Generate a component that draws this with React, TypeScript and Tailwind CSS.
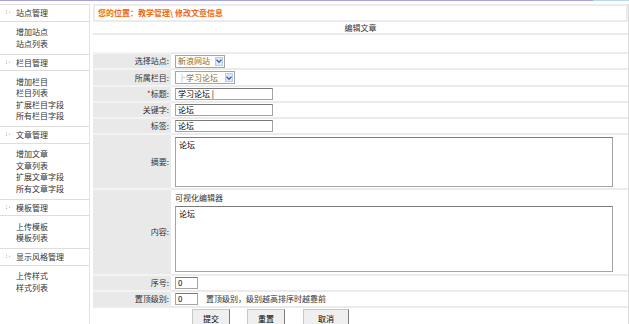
import React from 'react';

const menu = [
  { title: '站点管理', items: ['增加站点', '站点列表'] },
  { title: '栏目管理', items: ['增加栏目', '栏目列表', '扩展栏目字段', '所有栏目字段'] },
  { title: '文章管理', items: ['增加文章', '文章列表', '扩展文章字段', '所有文章字段'] },
  { title: '模板管理', items: ['上传模板', '模板列表'] },
  { title: '显示风格管理', items: ['上传样式', '样式列表'] },
];

function Bullet() {
  return (
    <svg width="5" height="5" viewBox="0 0 5 5" className="mr-[5px]">
      <rect x="0" y="0.5" width="1" height="1" fill="#b0b0b0" />
      <rect x="0" y="3" width="1" height="1" fill="#b0b0b0" />
      <rect x="3" y="1.8" width="1" height="1" fill="#b0b0b0" />
    </svg>
  );
}

function SelectArrow() {
  return (
    <span className="ml-auto mr-[1px] flex h-[9px] w-[8px] shrink-0 items-center justify-center border border-[#b8cde8] bg-[#dce8f8]">
      <svg width="6" height="4" viewBox="0 0 6 4">
        <path d="M0.5 0.8 L3 3.2 L5.5 0.8" stroke="#3a5fa8" strokeWidth="1.3" fill="none" />
      </svg>
    </span>
  );
}

function Row({ label, h, children, star }: { label: string; h: string; children?: React.ReactNode; star?: boolean }) {
  return (
    <div className={`flex ${h}`}>
      <div className="flex w-[78px] shrink-0 items-center justify-end border-t-2 border-[#f3f3f3] bg-[#e9e9e9] pr-[2px] text-[#333]">
        {star && <span className="text-[#e00]">*</span>}
        {label}:
      </div>
      <div className="flex flex-1 items-center border-t-2 border-[#ebebeb] bg-white pl-[4px]">{children}</div>
    </div>
  );
}

function TextBox({ w, value }: { w: string; value: string }) {
  return (
    <div className={`${w} flex h-[12px] items-center border border-[#a5a5a5] border-t-[#7a7a7a] bg-white pl-[2px] text-black`}>
      {value}
    </div>
  );
}

export default function App() {
  return (
    <div className="h-[324px] w-[629px] overflow-hidden bg-white text-[8px] leading-[11.5px] text-[#333] [font-family:'Noto_Sans_CJK_SC','Liberation_Sans',sans-serif]">
      <div className="flex h-px">
        <div className="w-[593px] bg-[#a7a2dc]" />
        <div className="flex-1 bg-[#b5d9f2]" />
      </div>
      <div className="flex pt-[3px]">
        {/* sidebar */}
        <div className="w-[90px] shrink-0 border-r border-b border-[#e2e2e2]">
          {menu.map((g) => (
            <div key={g.title}>
              <div className="flex h-[17.5px] items-center border-y border-[#dedede] pl-[6px]">
                <Bullet />
                <span>{g.title}</span>
              </div>
              <div className="pl-[16px] pt-[4.5px] pb-[4.5px]">
                {g.items.map((it) => (
                  <div key={it}>{it}</div>
                ))}
              </div>
            </div>
          ))}
        </div>

        {/* main */}
        <div className="ml-[3px] flex-1 border-r border-[#dcdcdc]">
          <div className="flex h-[18px] items-center border-2 border-[#ebebeb] pl-[3px] font-bold text-[#f06a10]">
            您的位置：教学管理\ 修改文章信息
          </div>
          <div className="flex h-[11px] items-center justify-center">编辑文章</div>
          <div className="h-[19px] border-t-2 border-[#ebebeb]" />
          <Row label="选择站点" h="h-[16px]">
            <div className="flex h-[13px] w-[50px] items-center whitespace-nowrap border border-[#a5a5a5] bg-white pl-[2px] text-[#8a6a2e]">
              新浪网站
              <SelectArrow />
            </div>
          </Row>
          <Row label="所属栏目" h="h-[17px]">
            <div className="flex h-[13px] w-[60px] items-center whitespace-nowrap border border-[#a5a5a5] bg-white pl-[2px] text-[#8a6a2e]">
              ├学习论坛
              <SelectArrow />
            </div>
          </Row>
          <Row label="标题" h="h-[16px]" star>
            <TextBox w="w-[98px]" value="学习论坛 |" />
          </Row>
          <Row label="关键字" h="h-[16px]">
            <TextBox w="w-[98px]" value="论坛" />
          </Row>
          <Row label="标签" h="h-[16px]">
            <TextBox w="w-[98px]" value="论坛" />
          </Row>
          <Row label="摘要" h="h-[55px]">
            <div className="h-[50px] w-[438px] border border-[#a5a5a5] border-t-[#7a7a7a] pl-[3px] pt-[1px] text-black">论坛</div>
          </Row>
          <Row label="内容" h="h-[86px]">
            <div className="flex flex-col">
              <div className="mb-[3px] h-[11px] leading-[11px]">可视化编辑器</div>
              <div className="h-[66px] w-[438px] border border-[#a5a5a5] border-t-[#7a7a7a] pl-[3px] pt-[1px] text-black">论坛</div>
            </div>
          </Row>
          <Row label="序号" h="h-[16px]">
            <TextBox w="w-[23px]" value="0" />
          </Row>
          <Row label="置顶级别" h="h-[16px]">
            <TextBox w="w-[23px]" value="0" />
            <span className="ml-[8px]">置顶级别，级别越高排序时越靠前</span>
          </Row>
          <div className="flex h-[20px] border-t-2 border-[#ebebeb] pl-[99px] pt-[1px]">
            {[
              ['提交', 'w-[38px]'],
              ['重置', 'w-[38px] ml-[17px]'],
              ['取消', 'w-[46px] ml-[18px]'],
            ].map(([t, c]) => (
              <div
                key={t}
                className={`${c} flex h-[19px] items-center justify-center border border-[#c8c8c8] border-r-[#7d7d7d] border-b-[#7d7d7d] bg-[#efefef] text-black`}
              >
                {t}
              </div>
            ))}
          </div>
        </div>
      </div>
    </div>
  );
}
